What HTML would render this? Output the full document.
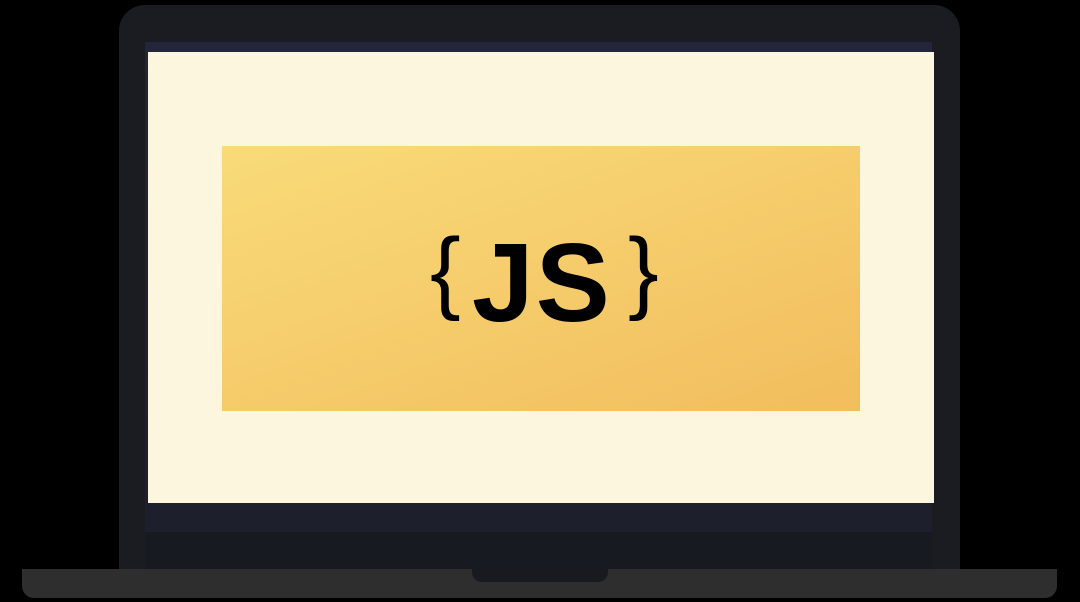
<!DOCTYPE html>
<html><head><style>
body{margin:0;width:1080px;height:602px;background:#000;position:relative;overflow:hidden;font-family:"Liberation Sans",sans-serif}
div,span{position:absolute}
.lid{left:119px;top:5px;width:841px;height:570px;background:#1b1c21;border-radius:26px 26px 0 0}
.scr{left:145px;top:42px;width:787px;height:490px;background:linear-gradient(#23253a,#1e1f2c)}
.cream{left:148px;top:52px;width:786px;height:451px;background:#fdf6de}
.chin{left:145px;top:532px;width:787px;height:37px;background:#181a22}
.box{left:222px;top:146px;width:638px;height:265px;background:linear-gradient(160deg,#f9db79,#f2bd5d)}
.base{left:22px;top:569px;width:1035px;height:29px;background:#2e2e2f;border-radius:0 0 12px 12px}
.notch{left:472px;top:569px;width:136px;height:13px;background:#191a1f;border-radius:0 0 10px 10px}
.js{left:472px;top:228px;font-size:111px;font-weight:bold;color:#000;line-height:1;letter-spacing:2px}
.br{top:225px;font-size:92px;color:#000;line-height:1}
</style></head><body>
<div class="lid"></div>
<div class="scr"></div>
<div class="chin"></div>
<div class="cream"></div>
<div class="box"></div>
<span class="br" style="left:430px">{</span>
<span class="js">JS</span>
<span class="br" style="left:628px">}</span>
<div class="base"></div>
<div class="notch"></div>
</body></html>
